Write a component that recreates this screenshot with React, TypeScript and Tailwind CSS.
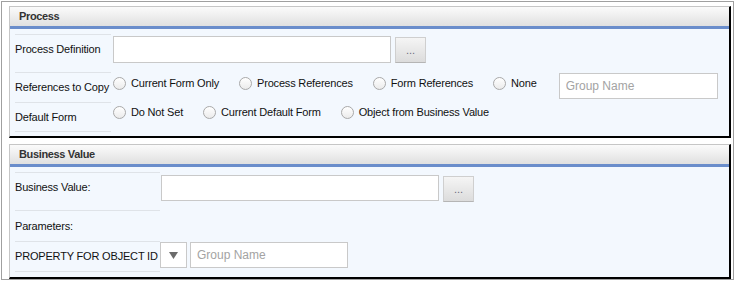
import React from "react";

function Radio({ label }: { label: string }) {
  return (
    <div className="flex items-center h-[13px] mr-[20px] shrink-0">
      <span className="w-[13px] h-[13px] rounded-full border border-[#a9a9a9] bg-linear-to-b from-white to-[#ebebeb] shrink-0" />
      <span className="ml-[5px] whitespace-nowrap leading-[13px]">{label}</span>
    </div>
  );
}

function EllipsisButton({ mt }: { mt: string }) {
  return (
    <div
      className={`${mt} ml-[4px] w-[31px] h-[26px] border border-[#cfcfcf] border-b-[#b5b5b5] bg-linear-to-b from-[#f5f5f5] to-[#dcdcdc] flex items-center justify-center text-[#6d6d80] text-[11px] leading-[13px] tracking-normal`}
    >
      ...
    </div>
  );
}

function TextBox({ w, cls, placeholder }: { w: string; cls: string; placeholder?: string }) {
  return (
    <input
      readOnly
      placeholder={placeholder}
      className={`${w} ${cls} h-[26px] border border-[#c9c9c9] bg-white pl-[6px] text-[12px] tracking-normal outline-none placeholder:text-[#a3a3a3]`}
    />
  );
}

function Panel({ title, children }: { title: string; children: React.ReactNode }) {
  return (
    <div className="border-t border-l border-r-2 border-b-2 border-t-[#c6c6c6] border-l-[#c6c6c6] border-r-black border-b-black flex flex-col">
      <div className="h-[19px] bg-linear-to-b from-[#fbfbfb] to-[#e0e0e0] pl-[9px] flex items-center font-bold text-[#333] tracking-[-0.35px]">
        {title}
      </div>
      <div className="h-[3px] bg-[#6a8dcb]" />
      {children}
    </div>
  );
}

const line = "border-t border-t-[#dfe3e8]";

export default function App() {
  return (
    <div className="w-[736px] h-[281px] bg-white pt-px pl-px pr-[2px] font-['Liberation_Sans',Arial,sans-serif] text-[11px] tracking-[-0.18px] text-[#111]">
      <div className="h-[279px] border border-[#a0a0a0] pl-[7px] pr-[2px] pt-[4px] flex flex-col gap-[6px]">
        <Panel title="Process">
          <div className="bg-[#f3f8fe] pl-[5px] pt-[5px] pb-[4px] flex flex-col">
            <div className="flex h-[38px]">
              <div className={`w-[96px] ${line} pt-[8px] leading-[13px] whitespace-nowrap`}>Process Definition</div>
              <div className="ml-[2px] flex items-start">
                <TextBox w="w-[278px]" cls="mt-[2px] h-[27px]" />
                <EllipsisButton mt="mt-[3px]" />
              </div>
            </div>
            <div className="flex h-[30px]">
              <div className={`w-[96px] ${line} pt-[8px] leading-[13px] whitespace-nowrap`}>References to Copy</div>
              <div className="ml-[2px] flex items-start">
                <div className="flex mt-[5px]">
                  <Radio label="Current Form Only" />
                  <Radio label="Process References" />
                  <Radio label="Form References" />
                  <Radio label="None" />
                </div>
                <TextBox w="w-[159px]" cls="mt-[1px] ml-[2px]" placeholder="Group Name" />
              </div>
            </div>
            <div className="flex h-[29px]">
              <div className={`w-[96px] ${line} pt-[8px] leading-[13px] whitespace-nowrap`}>Default Form</div>
              <div className="ml-[2px] flex items-start">
                <div className="flex mt-[4px]">
                  <Radio label="Do Not Set" />
                  <Radio label="Current Default Form" />
                  <Radio label="Object from Business Value" />
                </div>
              </div>
            </div>
            <div className={`w-[96px] ${line}`} />
          </div>
        </Panel>
        <Panel title="Business Value">
          <div className="bg-[#f3f8fe] pl-[5px] pt-[5px] pb-[5px] flex flex-col">
            <div className="flex h-[38px]">
              <div className={`w-[145px] ${line} pt-[8px] leading-[13px] whitespace-nowrap`}>Business Value:</div>
              <div className="ml-[1px] flex items-start">
                <TextBox w="w-[278px]" cls="mt-[3px]" />
                <EllipsisButton mt="mt-[4px]" />
              </div>
            </div>
            <div className="flex h-[31px]">
              <div className={`w-[145px] ${line} pt-[9px] leading-[13px] whitespace-nowrap`}>Parameters:</div>
            </div>
            <div className="flex h-[30px]">
              <div className={`w-[145px] ${line} pt-[8px] leading-[13px] whitespace-nowrap`}>PROPERTY FOR OBJECT ID</div>
              <div className="flex items-start">
                <div className="mt-[1px] w-[27px] h-[26px] border border-[#c9c9c9] bg-white flex items-center justify-center">
                  <svg width="9" height="7" viewBox="0 0 9 7">
                    <polygon points="0,0 9,0 4.5,7" fill="#6b6b6b" />
                  </svg>
                </div>
                <TextBox w="w-[158px]" cls="mt-[1px] ml-[3px]" placeholder="Group Name" />
              </div>
            </div>
            <div className={`w-[145px] ${line}`} />
          </div>
        </Panel>
      </div>
    </div>
  );
}
